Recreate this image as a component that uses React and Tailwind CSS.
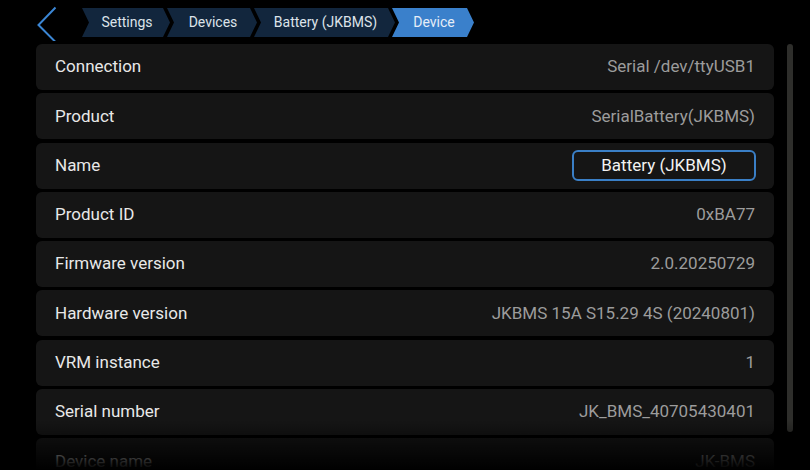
import React from 'react';

const crumbs = [
  { label: 'Settings', w: 'w-[88px]', active: false },
  { label: 'Devices', w: 'w-[90px]', active: false },
  { label: 'Battery (JKBMS)', w: 'w-[141px]', active: false },
  { label: 'Device', w: 'w-[82px]', active: true },
];

const rows = [
  { label: 'Connection', value: 'Serial /dev/ttyUSB1' },
  { label: 'Product', value: 'SerialBattery(JKBMS)' },
  { label: 'Name', value: 'Battery (JKBMS)', edit: true },
  { label: 'Product ID', value: '0xBA77' },
  { label: 'Firmware version', value: '2.0.20250729' },
  { label: 'Hardware version', value: 'JKBMS 15A S15.29 4S (20240801)' },
  { label: 'VRM instance', value: '1' },
  { label: 'Serial number', value: 'JK_BMS_40705430401' },
  { label: 'Device name', value: 'JK-BMS' },
];

const arrow =
  '[clip-path:polygon(0_0,calc(100%-7px)_0,100%_50%,calc(100%-7px)_100%,0_100%,7px_50%)]';

export default function App() {
  return (
    <div
      className="relative w-[810px] h-[470px] overflow-hidden bg-black"
      style={{ fontFamily: 'Roboto, "Noto Sans", sans-serif' }}
    >
      {/* header */}
      <div className="flex items-center h-[44px] pl-[36px]">
        <svg width="24" height="38" viewBox="0 0 24 38" className="mr-[22px]">
          <path d="M19.5 4.5 L2.5 22 L19.5 39" fill="none" stroke="#3b86d4" strokeWidth="2" />
        </svg>
        <div className="flex items-center h-[29px] mt-[1px]">
          {crumbs.map((c, i) => (
            <div
              key={c.label}
              className={`${c.w} h-full flex items-center justify-center text-[14px] pl-[2px] ${arrow} ${
                i > 0 ? 'ml-[-3px]' : ''
              } ${c.active ? 'bg-[#3a80cb] text-[#e6eef8]' : 'bg-[#12263d] text-[#dde3ea]'}`}
            >
              {c.label}
            </div>
          ))}
        </div>
      </div>

      {/* list */}
      <div className="flex pl-[36px]">
        <div className="w-[738px] flex flex-col gap-[3.3px]">
          {rows.map((r) => (
            <div
              key={r.label}
              className="h-[46px] shrink-0 flex items-center justify-between px-[19px] rounded-[6px] bg-[#151515]"
            >
              <span className="text-[17px] text-[#e8e8e8]">{r.label}</span>
              {r.edit ? (
                <div className="w-[184px] h-[31px] mr-[-1px] flex items-center justify-center rounded-[6px] border-2 border-[#3a7fc6] text-[17px] text-[#f2f2f2]">
                  {r.value}
                </div>
              ) : (
                <span className="text-[17px] text-[#9c9c9c]">{r.value}</span>
              )}
            </div>
          ))}
        </div>
        <div className="ml-[13px] w-[6px] h-[388px] rounded-full bg-[#2e2e2b]" />
      </div>

      {/* bottom fade */}
      <div className="absolute left-0 right-0 bottom-0 h-[50px] bg-gradient-to-b from-transparent to-black pointer-events-none" />
    </div>
  );
}
